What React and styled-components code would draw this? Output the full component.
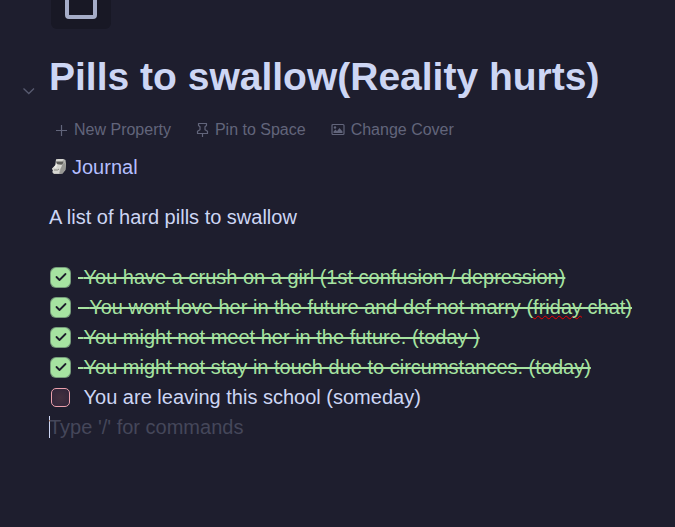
import React, { useState } from "react";
import styled, { createGlobalStyle } from "styled-components";

const Global = createGlobalStyle`
  * { box-sizing: border-box; }
  html { background: #1e1e2e; }
  body {
    margin: 0;
    background: #1e1e2e;
    color: #cdd6f4;
    font-family: "Liberation Sans", Arial, sans-serif;
    font-size: 20px;
    line-height: 30px;
  }
`;

const Page = styled.main`
  display: flex;
  flex-direction: column;
  min-height: 100vh;
  overflow: hidden;
  padding: 0 24px 0 49px;
`;

const IconTile = styled.button`
  display: flex;
  align-items: center;
  justify-content: center;
  width: 60px;
  height: 60px;
  margin: -31px 0 0 2px;
  padding: 0;
  border: 0;
  border-radius: 6px;
  background: #181825;
  color: #a6adc8;
`;

const TitleRow = styled.header`
  position: relative;
  margin-top: 23px;
`;

const Title = styled.h1`
  margin: 0;
  font-size: 39px;
  line-height: 50px;
  font-weight: 700;
  color: #cdd6f4;
`;

const Fold = styled.button`
  position: absolute;
  left: -27px;
  top: 32px;
  display: flex;
  padding: 0;
  border: 0;
  background: none;
  color: #585b70;
`;

const Actions = styled.nav`
  display: flex;
  gap: 25px;
  margin-top: 18px;
  padding-left: 6px;
`;

const Action = styled.button`
  display: flex;
  align-items: center;
  gap: 6px;
  padding: 0;
  border: 0;
  background: none;
  color: #62657b;
  font: inherit;
  font-size: 16px;
  line-height: 20px;
  white-space: nowrap;
`;

const SpaceLink = styled.a`
  display: flex;
  align-items: center;
  gap: 5px;
  align-self: flex-start;
  margin-top: 12px;
  padding-left: 2px;
  color: #b4befe;
  text-decoration: none;
`;

const Paragraph = styled.p`
  margin: 20px 0 30px;
`;

const List = styled.ul`
  margin: 0;
  padding: 0;
  list-style: none;
`;

const Task = styled.label`
  display: flex;
  align-items: center;
  gap: 6px;
  color: ${(p) => (p.$done ? "#a6e3a1" : "#cdd6f4")};
`;

const CheckWrap = styled.span`
  display: grid;
  flex: none;
  width: 23px;
  place-items: center;
  > * { grid-area: 1 / 1; }
  svg { pointer-events: none; }
`;

const Check = styled.input`
  appearance: none;
  width: 19px;
  height: 19px;
  margin: 0;
  border: 1px solid #eba0ac;
  border-radius: 5px;
  background: radial-gradient(#43303f, #30253a);

  &:checked {
    border-color: #a6e3a1;
    background: #a6e3a1;
    box-shadow: 0 0 0 1px #769d7b;
  }
`;

const TaskText = styled.span`
  white-space: pre-wrap;
  text-decoration: ${(p) => (p.$done ? "line-through 2px" : "none")};
`;

const Misspelled = styled.span`
  text-decoration: underline wavy #f00000 1px;
  text-underline-offset: 1px;
  text-decoration-skip-ink: none;
`;

const Prompt = styled.div`
  display: flex;
  align-items: center;
`;

const Caret = styled.span`
  width: 1px;
  height: 22px;
  margin-right: -1px;
  background: #cdd6f4;
`;

const PromptInput = styled.input`
  flex: 1;
  min-width: 0;
  height: 30px;
  padding: 0;
  border: 0;
  outline: 0;
  background: none;
  color: #cdd6f4;
  font: inherit;
  &::placeholder { color: #45475a; opacity: 1; }
`;

const SquareIcon = () => (
  <svg width="60" height="60" viewBox="0 0 60 60" fill="none" stroke="currentColor" strokeWidth="4" aria-hidden="true">
    <rect x="16" y="20" width="28" height="28" rx="2" />
  </svg>
);

const ChevronIcon = () => (
  <svg width="14" height="14" viewBox="0 0 14 14" fill="none" stroke="currentColor" strokeWidth="1.3" aria-hidden="true">
    <path d="M1.5 4.5 6.8 9.5 12 4.5" />
  </svg>
);

const PlusIcon = () => (
  <svg width="13" height="14" viewBox="0 0 13 14" fill="none" stroke="currentColor" strokeWidth="1.2" aria-hidden="true">
    <path d="M1 7.5h11M6.5 2v11" />
  </svg>
);

const PinIcon = () => (
  <svg width="13" height="16" viewBox="0 0 13 16" fill="none" stroke="currentColor" strokeWidth="1.2" strokeLinejoin="round" aria-hidden="true">
    <path d="M2.5 1.5h8v2L9 4.7v3.1l2.5 1.5v2.2h-10V9.3L4 7.8V4.7L2.5 3.5zM6.5 11.5V15" />
  </svg>
);

const ImageIcon = () => (
  <svg width="14" height="14" viewBox="0 0 14 14" fill="none" aria-hidden="true">
    <rect x="1" y="1.5" width="12" height="10" rx="1" stroke="currentColor" strokeWidth="1.2" />
    <circle cx="4" cy="4.5" r="1.2" fill="currentColor" />
    <path d="M2.5 10V8.500L4.500 6.500 6 8.200l2.500-3.200 3 3.500V10z" fill="currentColor" />
  </svg>
);

const MoaiIcon = () => (
  <svg width="16" height="18" viewBox="0 0 16 18" aria-hidden="true">
    <path d="M5 1.500 7.500 1h5l2 1 .5 4-.5 6-3 3.500-3 .5H3l-1.500-1.500.5-2-1-1.500L4.500 7z" fill="#b2b2af" />
    <path d="M5 1.500 7.500 1h5l-1 2v5L9 11l-1 4.500H3L1.500 14l.5-2-1-1.500L4.500 7z" fill="#d6d6d1" />
    <path d="m11.500 6 2.500-1 .5 2-.5 5-2.500 3.500H8.500l1-4z" fill="#969693" />
    <path d="M5 3.500h7.500l-.5 2-1.500 1.200-4.500-.4z" fill="#5c5c59" />
    <path d="M5.500 5.500 3 9.500l2 .7 1.500-3.700z" fill="#ecece7" />
    <path d="M3 12h3.500L8 11" fill="none" stroke="#85857f" strokeWidth="1" />
  </svg>
);

const TickIcon = () => (
  <svg width="14" height="14" viewBox="0 0 14 14" fill="none" stroke="#1e1e2e" strokeWidth="1.8" strokeLinecap="round" strokeLinejoin="round" aria-hidden="true">
    <path d="m2.500 7 3 3 6-6" />
  </svg>
);

const initialTasks = [
  { done: true, text: " You have a crush on a girl (1st confusion / depression)" },
  {
    done: true,
    text: (
      <>
        {"  You wont love her in the future and def not marry ("}
        <Misspelled>friday</Misspelled>
        {" chat)"}
      </>
    ),
  },
  { done: true, text: " You might not meet her in the future. (today )" },
  { done: true, text: " You might not stay in touch due to circumstances. (today)" },
  { done: false, text: " You are leaving this school (someday)" },
];

export default function App() {
  const [tasks, setTasks] = useState(initialTasks);
  const toggle = (index) =>
    setTasks(tasks.map((t, i) => (i === index ? { ...t, done: !t.done } : t)));

  return (
    <>
      <Global />
      <Page>
        <IconTile type="button" aria-label="Page icon"><SquareIcon /></IconTile>
        <TitleRow>
          <Fold type="button" aria-label="Collapse"><ChevronIcon /></Fold>
          <Title>Pills to swallow(Reality hurts)</Title>
        </TitleRow>
        <Actions>
          <Action type="button"><PlusIcon />New Property</Action>
          <Action type="button"><PinIcon />Pin to Space</Action>
          <Action type="button"><ImageIcon />Change Cover</Action>
        </Actions>
        <SpaceLink href="#journal"><MoaiIcon />Journal</SpaceLink>
        <Paragraph>A list of hard pills to swallow</Paragraph>
        <List>
          {tasks.map((task, i) => (
            <li key={i}>
              <Task $done={task.done}>
                <CheckWrap>
                  <Check type="checkbox" checked={task.done} onChange={() => toggle(i)} />
                  {task.done && <TickIcon />}
                </CheckWrap>
                <TaskText $done={task.done}>{task.text}</TaskText>
              </Task>
            </li>
          ))}
        </List>
        <Prompt>
          <Caret />
          <PromptInput aria-label="New block" placeholder="Type '/' for commands" />
        </Prompt>
      </Page>
    </>
  );
}
